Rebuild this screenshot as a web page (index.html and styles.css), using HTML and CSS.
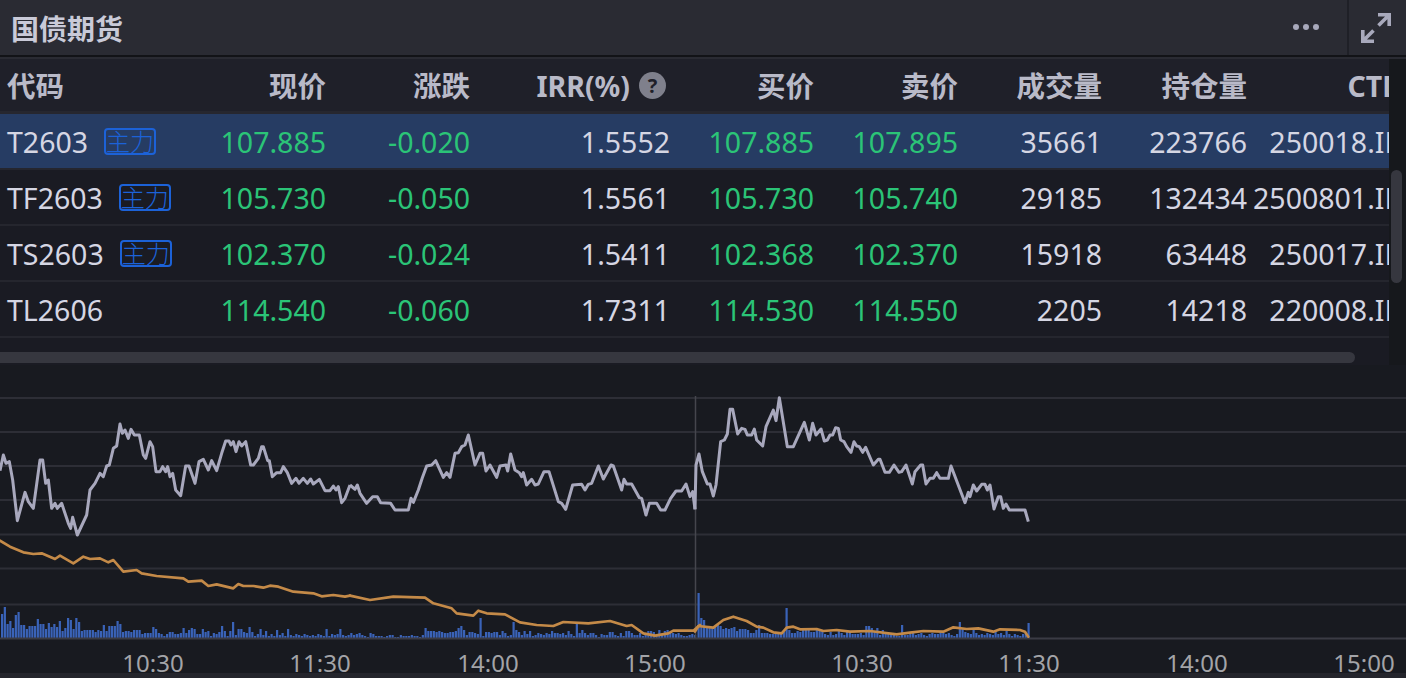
FILE: index.html
```html
<!DOCTYPE html>
<html lang="zh-CN">
<head>
<meta charset="utf-8">
<title>国债期货</title>
<link rel="stylesheet" href="styles.css">
</head>
<body>
<main class="app">
  <header class="topbar">
    <h1 class="title">国债期货</h1>
    <div class="more">
      <svg class="more-icon" viewBox="0 0 30 6"><circle cx="5" cy="3" r="3"/><circle cx="15" cy="3" r="3"/><circle cx="25" cy="3" r="3"/></svg>
    </div>
    <div class="expand">
      <svg class="expand-icon" viewBox="0 0 30 30"><path d="M17 1.8H28.2V13M27.6 2.4L17.5 12.5M13 28.2H1.8V17M2.4 27.6L12.5 17.5"/></svg>
    </div>
  </header>

  <section class="pane">
    <div class="clip">
      <div class="row head">
        <div class="cell first">代码</div>
        <div class="cell">现价</div>
        <div class="cell">涨跌</div>
        <div class="cell irr">IRR(%)<span class="help">?</span></div>
        <div class="cell">买价</div>
        <div class="cell">卖价</div>
        <div class="cell">成交量</div>
        <div class="cell">持仓量</div>
        <div class="cell">CTD</div>
      </div>
      <div class="row active">
        <div class="cell first">T2603<span class="tag">主力</span></div>
        <div class="cell down">107.885</div>
        <div class="cell down">-0.020</div>
        <div class="cell">1.5552</div>
        <div class="cell down">107.885</div>
        <div class="cell down">107.895</div>
        <div class="cell">35661</div>
        <div class="cell">223766</div>
        <div class="cell">250018.IB</div>
      </div>
      <div class="row">
        <div class="cell first">TF2603<span class="tag">主力</span></div>
        <div class="cell down">105.730</div>
        <div class="cell down">-0.050</div>
        <div class="cell">1.5561</div>
        <div class="cell down">105.730</div>
        <div class="cell down">105.740</div>
        <div class="cell">29185</div>
        <div class="cell">132434</div>
        <div class="cell">2500801.IB</div>
      </div>
      <div class="row">
        <div class="cell first">TS2603<span class="tag">主力</span></div>
        <div class="cell down">102.370</div>
        <div class="cell down">-0.024</div>
        <div class="cell">1.5411</div>
        <div class="cell down">102.368</div>
        <div class="cell down">102.370</div>
        <div class="cell">15918</div>
        <div class="cell">63448</div>
        <div class="cell">250017.IB</div>
      </div>
      <div class="row">
        <div class="cell first">TL2606</div>
        <div class="cell down">114.540</div>
        <div class="cell down">-0.060</div>
        <div class="cell">1.7311</div>
        <div class="cell down">114.530</div>
        <div class="cell down">114.550</div>
        <div class="cell">2205</div>
        <div class="cell">14218</div>
        <div class="cell">220008.IB</div>
      </div>
    </div>
    <div class="vtrack"><div class="vthumb"></div></div>
    <div class="htrack"><div class="hthumb"></div></div>
  </section>

  <svg class="chart" viewBox="0 365 1406 313">
    <g class="grid">
      <path d="M0 398H1406M0 432H1406M0 466H1406M0 500H1406M0 534.500H1406M0 568.500H1406M0 604.500H1406"/>
    </g>
    <g id="bars" class="bars"></g>
    <path class="axis" d="M0 638.500H1406"/>
    <path class="cross" d="M695.500 396V638"/>
    <g transform="translate(0 330) scale(.33333)">
      <polyline class="price" points="0,422 10,375 18,400 28,395 38,450 52,572 75,487 85,515 100,535 120,390 128,390 137,460 145,450 155,535 165,520 172,535 185,520 205,580 212,595 218,562 232,615 260,555 270,480 285,460 300,430 310,440 320,408 328,405 340,355 350,348 360,282 367,310 375,300 385,325 393,298 403,315 418,315 430,375 437,385 450,335 458,350 468,425 480,425 488,410 497,425 503,410 510,440 518,430 527,480 542,497 557,408 567,408 585,460 597,395 610,388 625,420 635,392 650,422 665,370 677,333 687,333 693,345 700,335 708,365 717,335 725,348 737,335 752,405 760,405 775,385 785,350 790,350 803,392 808,392 817,440 830,428 842,428 850,410 862,428 875,460 888,445 897,460 910,445 922,460 932,447 940,462 958,448 975,482 990,482 1000,468 1008,480 1015,470 1025,518 1035,505 1050,465"/>
      <polyline class="vwap" points="0,632 30,650 70,667 100,672 125,670 165,687 180,677 220,700 250,680 270,687 300,685 325,697 340,690 370,725 410,720 425,730 470,738 550,745 565,755 605,752 625,768 650,763 700,775 715,762 730,768 760,768 790,773 810,767 835,770 880,785 940,790 965,799 1000,795 1035,800 1050,797"/>
    </g>
    <g transform="translate(350 330) scale(.33333)">
      <polyline class="price" points="0,465 15,478 22,465 30,490 50,520 68,500 82,500 92,518 122,520 135,540 175,540 183,505 190,517 205,480 217,443 230,408 245,405 257,392 280,442 290,428 300,442 315,370 325,368 335,350 345,345 355,315 375,405 390,370 398,370 408,423 420,405 440,442 450,408 468,405 473,423 482,372 495,420 508,428 515,440 520,428 530,465 545,448 555,465 565,462 582,425 597,425 625,515 635,520 647,538 668,465 695,463 705,480 715,463 725,460 745,408 760,447 783,405 790,408 815,480 822,448 830,462 845,462 868,503 875,505 888,555 898,520 920,520 932,540 945,540 962,505 978,483 995,483 1008,462 1020,500 1028,485 1035,538"/>
      <polyline class="vwap" points="0,797 60,810 130,800 225,803 250,820 305,835 320,850 370,857 385,842 410,850 465,853 510,877 560,885 610,888 640,876 715,880 780,873 830,888 845,885 880,910 915,917 955,910 970,902 1030,902 1050,885"/>
    </g>
    <g transform="translate(690 330) scale(.33333)">
      <polyline class="price" points="15,538 18,405 27,372 37,425 52,462 60,462 70,498 78,465 92,335 103,330 112,312 120,238 128,238 143,312 155,295 165,298 172,315 185,315 193,297 200,330 218,348 228,290 250,240 258,272 268,203 292,350 310,350 343,277 358,330 368,280 378,315 393,297 403,333 412,330 420,315 428,315 437,293 445,295 452,330 462,335 470,350 483,367 492,335 500,348 508,350 518,367 527,352 550,405 565,388 570,388 585,427 598,427 612,405 627,427 635,425 648,405 667,462 675,425 692,405 698,405 708,462 720,445 730,445 740,428 750,445 775,445 783,408 825,518 835,487 840,500 850,465 860,483 875,463 885,463 892,480 900,465 912,537 925,500 932,500 940,535 948,522 958,540 1005,540 1015,575"/>
      <polyline class="vwap" points="15,905 25,888 70,893 100,870 130,860 170,873 200,890 220,893 250,907 275,910 290,893 310,890 330,898 380,897 400,903 440,900 480,905 540,903 620,913 660,908 700,903 760,905 790,892 830,897 865,895 910,905 930,898 990,900 1005,905 1015,920"/>
    </g>
    <g class="times">
      <text x="153" y="672">10:30</text>
      <text x="320" y="672">11:30</text>
      <text x="488" y="672">14:00</text>
      <text x="655" y="672">15:00</text>
      <text x="862" y="672">10:30</text>
      <text x="1029" y="672">11:30</text>
      <text x="1197" y="672">14:00</text>
      <text x="1364" y="672">15:00</text>
    </g>
    <rect class="strip" x="0" y="673" width="1406" height="5"/>
  </svg>
</main>
<script src="chart.js"></script>
</body>
</html>
```

FILE: styles.css
```css
* { box-sizing: border-box; }
html, body { margin: 0; padding: 0; }
body {
  background: #1a1b23;
  overflow: hidden;
  font-family: "Noto Sans", "Noto Sans CJK SC", sans-serif;
}
.app { width: 1406px; height: 678px; display: flex; flex-direction: column; }

.topbar {
  height: 59px;
  display: flex;
  align-items: stretch;
  background: #2a2b33;
  border-bottom: 2px solid #2a2b33;
  box-shadow: inset 0 -2px 0 #121317;
  padding-bottom: 2px;
  flex: none;
}
.title {
  margin: 0;
  padding-left: 11px;
  flex: 1;
  display: flex;
  align-items: center;
  font: 700 28px/1 "Noto Sans CJK SC", sans-serif;
  color: #c9cad8;
}
.more { width: 82px; display: flex; align-items: center; padding-left: 24px; border-right: 2px solid #1f2027; }
.more-icon { width: 30px; height: 6px; fill: #a8a9bc; margin-top: -1px; }
.expand { width: 57px; display: flex; align-items: center; padding-left: 12px; }
.expand-icon { width: 30px; height: 30px; fill: none; stroke: #a8a9bc; stroke-width: 3.6; }

.pane {
  height: 306px;
  flex: none;
  display: grid;
  grid-template-columns: 1389px 17px;
  grid-template-rows: 290px 16px;
}
.clip { overflow: hidden; background: #1a1b23; }
.row {
  width: 1403px;
  height: 56px;
  padding-top: 2px;
  display: grid;
  grid-template-columns: 182px 144px 144px 200px 144px 144px 144px 145px 156px;
  align-items: center;
  border-bottom: 2px solid #25262e;
  font-size: 28.500px;
  line-height: 38px;
  color: #d5d6e3;
}
.head {
  height: 55px;
  background: #1f2029;
  border-bottom: 3px solid #26272f;
  color: #b9bac8;
  font-weight: 700;
}
.active { background: #263c63; }
.cell { text-align: right; white-space: nowrap; }
.first { display: flex; align-items: center; padding-left: 7px; text-align: left; }
.down { color: #2bc477; }
.irr { display: flex; align-items: center; justify-content: flex-end; padding-right: 4px; }
.help {
  width: 27px;
  height: 27px;
  margin: -2px 0 0 9px;
  border-radius: 50%;
  background: #7f808c;
  color: #1f2029;
  font-size: 20px;
  line-height: 27px;
  text-align: center;
}
.tag {
  width: 52px;
  height: 27px;
  margin: -2px 0 0 16px;
  border: 2px solid #1c62d8;
  border-radius: 4px;
  color: #1c62d8;
  font: 300 24px/22px "Noto Sans CJK SC", sans-serif;
  text-align: center;
  white-space: nowrap;
  overflow: visible;
  display: flex;
  justify-content: center;
}

.vtrack { grid-column: 2; grid-row: 1 / 3; background: #16181c; padding: 111px 4px 0 2px; }
.vthumb { height: 113px; border-radius: 6px; background: #36373f; }
.htrack { background: #1a1b23; padding: 3px 34px 2px 0; }
.hthumb { height: 11px; border-radius: 0 6px 6px 0; background: #36373f; }

.chart { display: block; width: 1406px; height: 313px; background: #181a20; flex: none; }
.grid path { stroke: #2d2e36; stroke-width: 2; fill: none; }
.axis { stroke: #3a3b44; stroke-width: 2; fill: none; }
.cross { stroke: #45464d; stroke-width: 1.500; fill: none; }
.bars rect { fill: #3a63b8; }
.price { fill: none; stroke: #a8a8bd; stroke-width: 9; stroke-linejoin: round; }
.vwap { fill: none; stroke: #c48a48; stroke-width: 8; stroke-linejoin: round; stroke-linecap: round; }
.times text { fill: #a3a4a8; font-size: 24px; text-anchor: middle; font-family: "Noto Sans", sans-serif; }
.strip { fill: #24252c; }
```

FILE: chart.js
```js
var series = [
  { start: 1, values: [24,31,14,17,10,23,26,13,13,9,12,12,12,19,14,14,9,15,11,14,11,17,7,10,20,18,9,20,16,7,8,8,8,8,6,8,7,13,7,12,12,12,17,14,6,7,7,6,8,8,8,4,5,5,5,11,9,5,4,2,4,6,6,4,4,5,10,5,8,10,9,4,4,9,6,7,2,5,4,6,12,7,2,7,16,3,9,9,6,5,11,6,2,4,9,3,7,2,4,2,8] },
  { start: 278.75, values: [3,5,2,9,3,2,4,3,2,4,3,2,3,2,4,3,2,9,2,4,3,4,9,3,2,3,5,3,4,5,3,2,1,5,4,2,2,2,1,2,3,3,1,1,3,2,2,2,3,2,2,1,3,10,7,7,7,6,7,6,5,5,6,6,7,10,12,8,3,6,6,5,4,20,2,6,6,5,6,6,3,7,5,2,3,16,8,6,3,7,4,7,2,3,5,4,3,5,4,7,5,5,4,5,3,7,4,2,14,5,8,5,3,5,5,3,1,4,3,3,6,6,3,2,5,2,7,7,5,3,3,5,2,3,7,7,6,3,8,4,7,8,6,5,4,5,3,2,2,3,4,3] },
  { start: 697.5, values: [45,20,18,10,10,10,12,14,12,9,10,9,10,11,7,9,9,9,8,5,5,8,13,5,5,5,4,4,5,4,4,6,30,8,5,5,7,6,8,8,8,6,6,8,8,8,4,3,6,3,4,7,5,3,6,5,4,4,4,5,3,12,12,10,6,10,3,8,4,4,3,4,2,2,13,3,3,4,5,3,4,5,3,2,4,5,4,4,6,5,4,5,3,2,4,16,10,6,5,4,9,5,3,4,3,5,4,3,6,4,5,3,7,4,2,4,3,2,4,5,15] }
];
var ns = "http://www.w3.org/2000/svg";
var group = document.getElementById("bars");
series.forEach(function (s) {
  s.values.forEach(function (h, i) {
    var r = document.createElementNS(ns, "rect");
    r.setAttribute("x", s.start + i * 2.75);
    r.setAttribute("y", 638 - h);
    r.setAttribute("width", 2.2);
    r.setAttribute("height", h);
    group.appendChild(r);
  });
});
```
